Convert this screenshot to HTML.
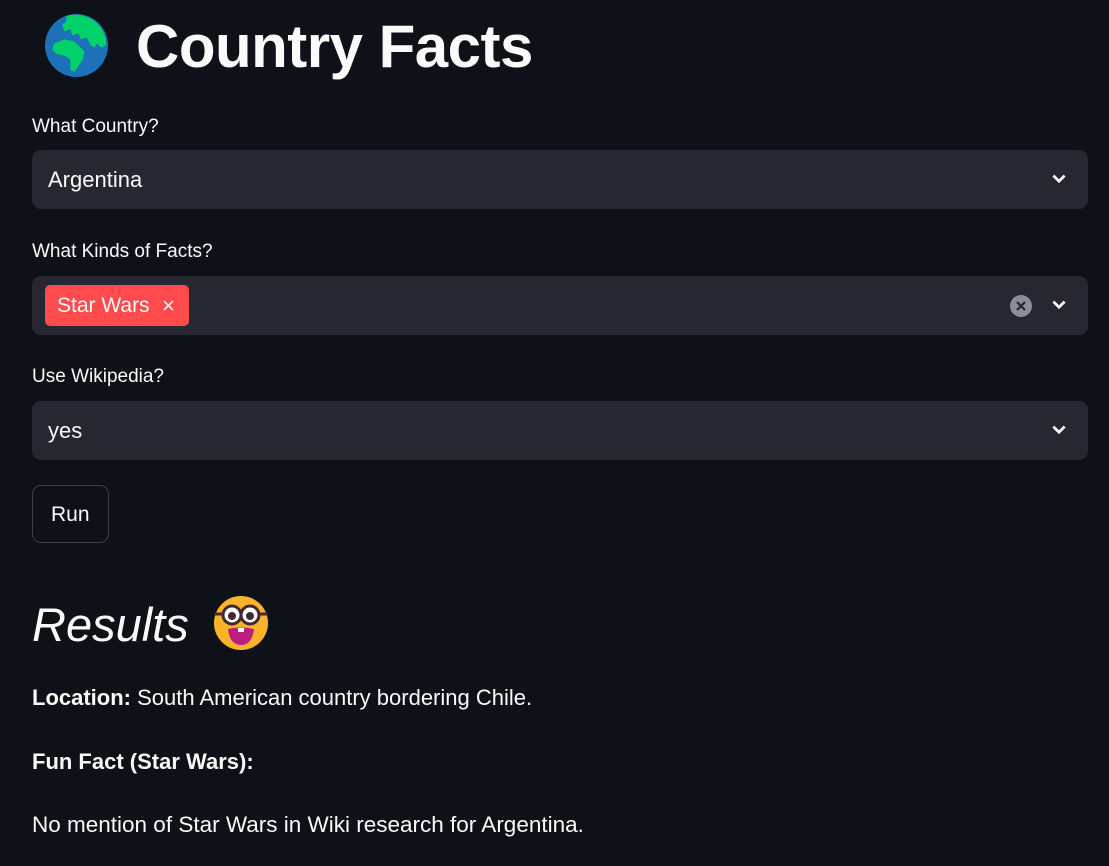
<!DOCTYPE html>
<html><head><style>
body{margin:0;background:#0e1117;color:#fafafa;font-family:"Liberation Sans",sans-serif;width:1109px;height:866px;overflow:hidden;position:relative}
.a{position:absolute}
.lbl{font-size:19px;color:#fafafa}
.box{position:absolute;left:32px;width:1056px;height:59px;background:#262730;border-radius:9px}
.box .t{position:absolute;left:16px;top:17px;font-size:22px}
.chev{position:absolute;right:20px;top:20px}
p{margin:0}
</style></head><body>
<svg class="a" style="left:44px;top:13px" width="65" height="65" viewBox="0 0 64 64">
<circle cx="32" cy="32" r="31" fill="#1d71b8"/>
<path d="M22 3 C30 0 44 2 52 10 C58 16 62 24 61 32 L56 34 L52 30 L50 34 L46 32 L42 24 L36 26 L34 20 L28 22 L26 16 L20 18 L18 12 L22 8Z" fill="#00d26a"/>
<path d="M10 30 L20 26 L30 28 L36 34 L40 38 L38 46 L34 52 L30 58 L26 56 L26 46 L20 42 L12 40 L8 36Z" fill="#00d26a"/>
</svg>
<div class="a" style="left:136px;top:12px;font-size:60px;font-weight:bold;letter-spacing:-0.5px">Country Facts</div>
<div class="a lbl" style="left:32px;top:116px">What Country?</div>
<div class="box" style="top:150px"><div class="t">Argentina</div>
<svg class="chev" width="18" height="18" viewBox="0 0 16 16"><path d="M3 5 L8 10 L13 5" stroke="#fafafa" stroke-width="2.4" fill="none"/></svg></div>
<div class="a lbl" style="left:32px;top:241px">What Kinds of Facts?</div>
<div class="box" style="top:276px">
<div class="a" style="left:13px;top:9px;width:144px;height:41px;background:#ff4b4b;border-radius:5px"><span class="a" style="left:12px;top:9px;font-size:21px">Star Wars</span><span class="a" style="left:117px;top:8px;font-size:22px">×</span></div>
<svg class="a" style="left:978px;top:19px" width="22" height="22" viewBox="0 0 22 22"><circle cx="11" cy="11" r="11" fill="#8b8d98"/><path d="M7 7 L15 15 M15 7 L7 15" stroke="#262730" stroke-width="2.2"/></svg>
<svg class="chev" width="18" height="18" viewBox="0 0 16 16"><path d="M3 5 L8 10 L13 5" stroke="#fafafa" stroke-width="2.4" fill="none"/></svg></div>
<div class="a lbl" style="left:32px;top:366px">Use Wikipedia?</div>
<div class="box" style="top:401px"><div class="t">yes</div>
<svg class="chev" width="18" height="18" viewBox="0 0 16 16"><path d="M3 5 L8 10 L13 5" stroke="#fafafa" stroke-width="2.4" fill="none"/></svg></div>
<div class="a" style="left:32px;top:485px;width:77px;height:58px;border:1px solid #3d3f48;border-radius:9px;box-sizing:border-box"><span class="a" style="left:18px;top:17px;font-size:21px">Run</span></div>
<div class="a" style="left:32px;top:597px;font-size:47px;font-style:italic">Results</div>
<svg class="a" style="left:212px;top:595px" width="58" height="56" viewBox="0 0 58 56">
<circle cx="29" cy="28" r="27" fill="#fcb32a"/>
<circle cx="20" cy="20" r="9" fill="#fff" stroke="#402a32" stroke-width="3"/><circle cx="38" cy="20" r="9" fill="#fff" stroke="#402a32" stroke-width="3"/>
<circle cx="20" cy="21" r="4" fill="#402a32"/><circle cx="38" cy="21" r="4" fill="#402a32"/>
<path d="M2 19 L11 19 M47 19 L56 19" stroke="#402a32" stroke-width="3"/>
<path d="M16 34 Q29 31 42 34 Q40 50 29 50 Q18 50 16 34Z" fill="#bb1d80"/><rect x="26" y="33" width="6" height="4" fill="#fff"/>
</svg>
<p class="a" style="left:32px;top:685px;font-size:22px"><b>Location:</b> South American country bordering Chile.</p>
<p class="a" style="left:32px;top:749px;font-size:22px"><b>Fun Fact (Star Wars):</b></p>
<p class="a" style="left:32px;top:812px;font-size:22.5px">No mention of Star Wars in Wiki research for Argentina.</p>
</body></html>
